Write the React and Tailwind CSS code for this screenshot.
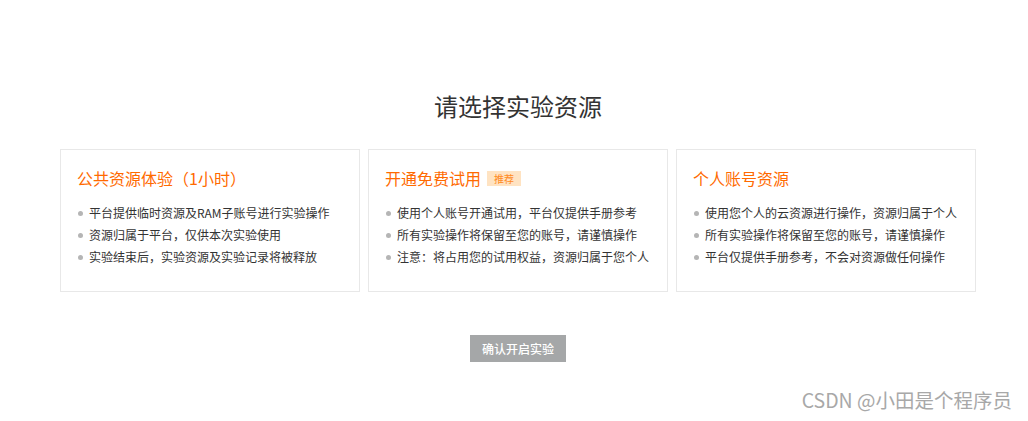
import React from "react";

const cards = [
    {
        title: "公共资源体验（1小时）",
        items: ["平台提供临时资源及RAM子账号进行实验操作", "资源归属于平台，仅供本次实验使用", "实验结束后，实验资源及实验记录将被释放"],
    },
    {
        title: "开通免费试用",
        badge: "推荐",
        items: ["使用个人账号开通试用，平台仅提供手册参考", "所有实验操作将保留至您的账号，请谨慎操作", "注意：将占用您的试用权益，资源归属于您个人"],
    },
    {
        title: "个人账号资源",
        items: ["使用您个人的云资源进行操作，资源归属于个人", "所有实验操作将保留至您的账号，请谨慎操作", "平台仅提供手册参考，不会对资源做任何操作"],
    },
];

const ResourceCard = ({ title, badge, items }) => (
    <div className="h-[143px] border border-[#e8e8e8] bg-white pt-[16px] px-[16px]">
        <div className="flex items-center gap-[6px] h-[24px] text-[16px] leading-[24px] text-[#ff6a00]">
            <span>{title}</span>
            {badge && (
                <span className="px-[7px] h-[15px] leading-[15px] text-[10px] bg-[#ffe3c2] text-[#ff8a1f]">
                    {badge}
                </span>
            )}
        </div>
        <ul className="mt-[12px]">
            {items.map((t) => (
                <li key={t} className="flex items-center gap-[6px] h-[22px] text-[12px] text-[#333]">
                    <span className="ml-[1px] w-[5px] h-[5px] rounded-full bg-[#b5b5b5]" />
                    <span className="whitespace-nowrap">{t}</span>
                </li>
            ))}
        </ul>
    </div>
);

export default function App() {
    return (
        <div
            className="relative w-[1028px] h-[421px] bg-white overflow-hidden"
            style={{ fontFamily: '"Noto Sans CJK SC", "Noto Sans", sans-serif' }}
        >
            <div className="ml-[60px] w-[916px] pt-[88px] flex flex-col items-center">
                <h1 className="h-[36px] leading-[36px] text-[24px] text-[#333] font-normal">请选择实验资源</h1>
                <div className="mt-[25px] w-full grid grid-cols-3 gap-[8px]">
                    {cards.map((c) => (
                        <ResourceCard key={c.title} {...c} />
                    ))}
                </div>
                <button className="mt-[43px] w-[96px] h-[27px] bg-[#a5a7a8] text-white text-[12px] font-medium">
                    确认开启实验
                </button>
            </div>
            <div className="absolute right-[16px] bottom-[9px] text-[19.5px] leading-[24px] text-[#a8a8a8]">
                CSDN @小田是个程序员
            </div>
        </div>
    );
}
